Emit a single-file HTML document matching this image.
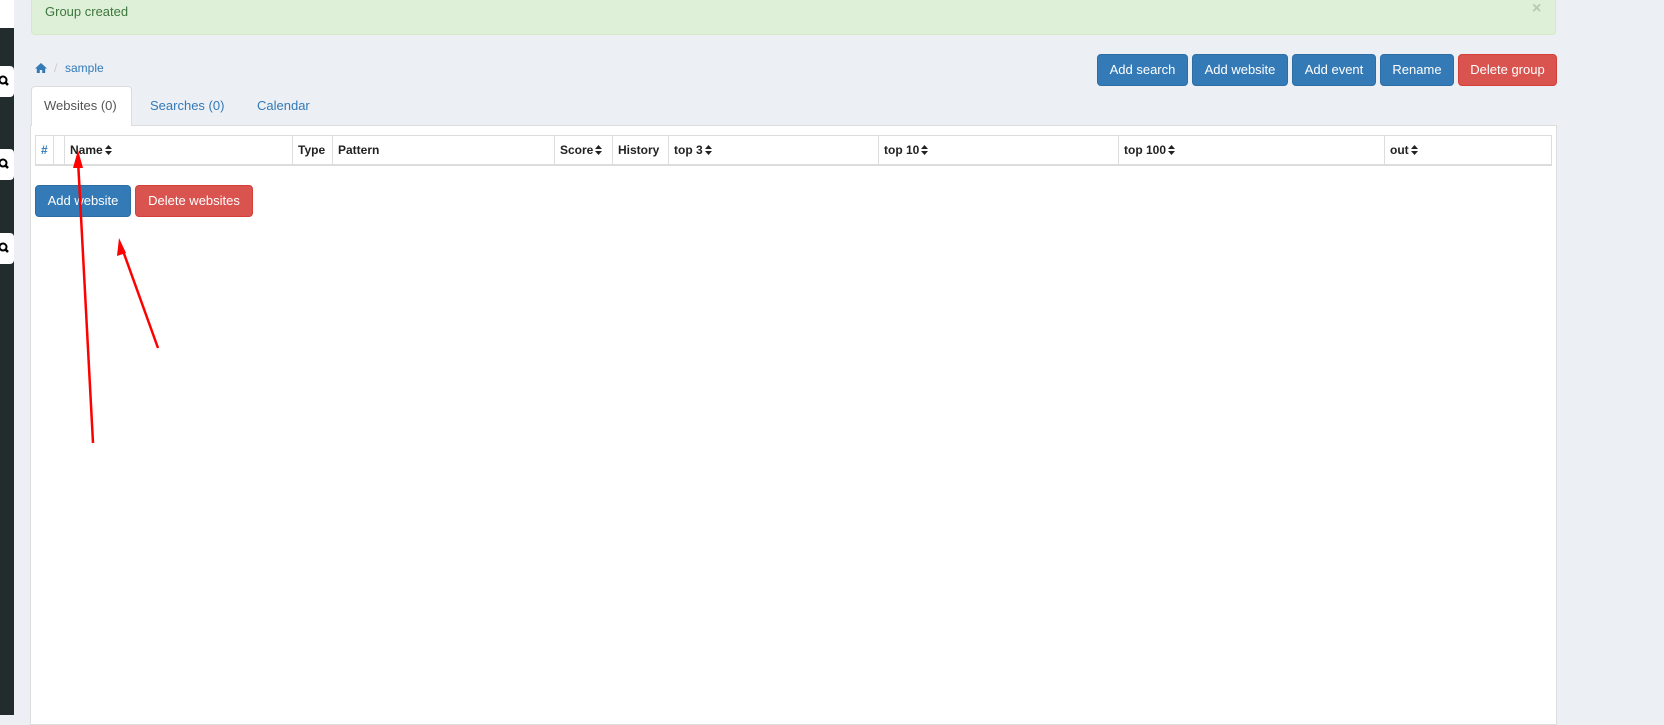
<!DOCTYPE html><html><head><style>
body{margin:0;width:1664px;height:715px;background:#eceff4;font-family:"Liberation Sans",sans-serif;font-size:13px;position:relative;overflow:hidden}
.abs{position:absolute}
.btn{position:absolute;height:32px;line-height:30px;color:#fff;text-align:center;border-radius:4px;font-size:13px;box-sizing:border-box}
.b{background:#337ab7;border:1px solid #2e6da4}.r{background:#d9534f;border:1px solid #d43f3a}
table{table-layout:fixed}
th{font-weight:bold;text-align:left;padding:0 5px;border-right:1px solid #ddd;color:#222;font-size:12px;height:28px;white-space:nowrap;overflow:hidden}
.s{display:inline-block;width:7px;height:10px;vertical-align:-1px;margin-left:2px}
.mag{position:absolute;left:0;width:14px;height:31px;background:#fff;border-radius:0 4px 4px 0}
</style></head><body>
<svg width="0" height="0" style="position:absolute"><defs><symbol id="srt" viewBox="0 0 7 10"><path d="M0 4L3.5 0L7 4ZM0 6L3.5 10L7 6Z" fill="#222"/></symbol></defs></svg>
<div class="abs" style="left:0;top:0;width:14px;height:715px;background:#222c2d"></div>
<div class="abs" style="left:0;top:0;width:14px;height:28px;background:#fff"></div>
<div class="mag" style="top:66px"><svg width="14" height="31"><circle cx="3" cy="14" r="3.5" fill="none" stroke="#000" stroke-width="2"/><line x1="5.5" y1="16.5" x2="8" y2="19" stroke="#000" stroke-width="2.5"/></svg></div>
<div class="mag" style="top:149px"><svg width="14" height="31"><circle cx="3" cy="14" r="3.5" fill="none" stroke="#000" stroke-width="2"/><line x1="5.5" y1="16.5" x2="8" y2="19" stroke="#000" stroke-width="2.5"/></svg></div>
<div class="mag" style="top:233px"><svg width="14" height="31"><circle cx="3" cy="14" r="3.5" fill="none" stroke="#000" stroke-width="2"/><line x1="5.5" y1="16.5" x2="8" y2="19" stroke="#000" stroke-width="2.5"/></svg></div>
<div class="abs" style="left:31px;top:-10px;width:1525px;height:45px;background:#dff0d8;border:1px solid #d6e9c6;border-radius:4px;box-sizing:border-box"></div>
<div class="abs" style="left:45px;top:4px;color:#3c763d">Group created</div>
<div class="abs" style="left:1532px;top:0;color:#b9c7b4;font-weight:bold;font-size:16px">×</div>
<svg class="abs" style="left:35px;top:63px" width="12" height="10"><path d="M6 0L0 5.5H1.8V10H4.8V7H7.2V10H10.2V5.5H12Z" fill="#337ab7"/></svg>
<div class="abs" style="left:54px;top:61px;font-size:12px;color:#ccc">/</div>
<div class="abs" style="left:65px;top:61px;font-size:12px;color:#337ab7">sample</div>
<div class="btn b" style="left:1097px;top:54px;width:91px">Add search</div>
<div class="btn b" style="left:1192px;top:54px;width:96px">Add website</div>
<div class="btn b" style="left:1292px;top:54px;width:84px">Add event</div>
<div class="btn b" style="left:1380px;top:54px;width:74px">Rename</div>
<div class="btn r" style="left:1458px;top:54px;width:99px">Delete group</div>
<div class="abs" style="left:30px;top:125px;width:1527px;height:600px;background:#fff;border:1px solid #ddd;box-sizing:border-box"></div>
<div class="abs" style="left:31px;top:86px;width:101px;height:40px;background:#fff;border:1px solid #ddd;border-bottom:none;border-radius:4px 4px 0 0;box-sizing:border-box"></div>
<div class="abs" style="left:44px;top:98px;color:#555">Websites (0)</div>
<div class="abs" style="left:150px;top:98px;color:#337ab7">Searches (0)</div>
<div class="abs" style="left:257px;top:98px;color:#337ab7">Calendar</div>
<table class="abs" style="left:35px;top:135px;width:1517px;border-collapse:collapse;border:1px solid #ddd;border-bottom:2px solid #ddd">
<colgroup><col style="width:18px"><col style="width:11px"><col style="width:228px"><col style="width:40px"><col style="width:222px"><col style="width:58px"><col style="width:56px"><col style="width:210px"><col style="width:240px"><col style="width:266px"><col></colgroup>
<tr><th style="color:#337ab7">#</th><th></th><th>Name<svg class="s"><use href="#srt"/></svg></th><th>Type</th><th>Pattern</th><th>Score<svg class="s"><use href="#srt"/></svg></th><th>History</th><th>top 3<svg class="s"><use href="#srt"/></svg></th><th>top 10<svg class="s"><use href="#srt"/></svg></th><th>top 100<svg class="s"><use href="#srt"/></svg></th><th>out<svg class="s"><use href="#srt"/></svg></th></tr></table>
<div class="btn b" style="left:35px;top:185px;width:96px">Add website</div>
<div class="btn r" style="left:135px;top:185px;width:118px">Delete websites</div>
<svg class="abs" style="left:0;top:0" width="1664" height="715"><g stroke="red" stroke-width="2.5" fill="red"><line x1="93" y1="443" x2="78" y2="160"/><polygon points="78,150 73,168 83,168" stroke="none"/><line x1="158" y1="348" x2="122" y2="248"/><polygon points="119,238 117,256 126,253" stroke="none"/></g></svg>
</body></html>
